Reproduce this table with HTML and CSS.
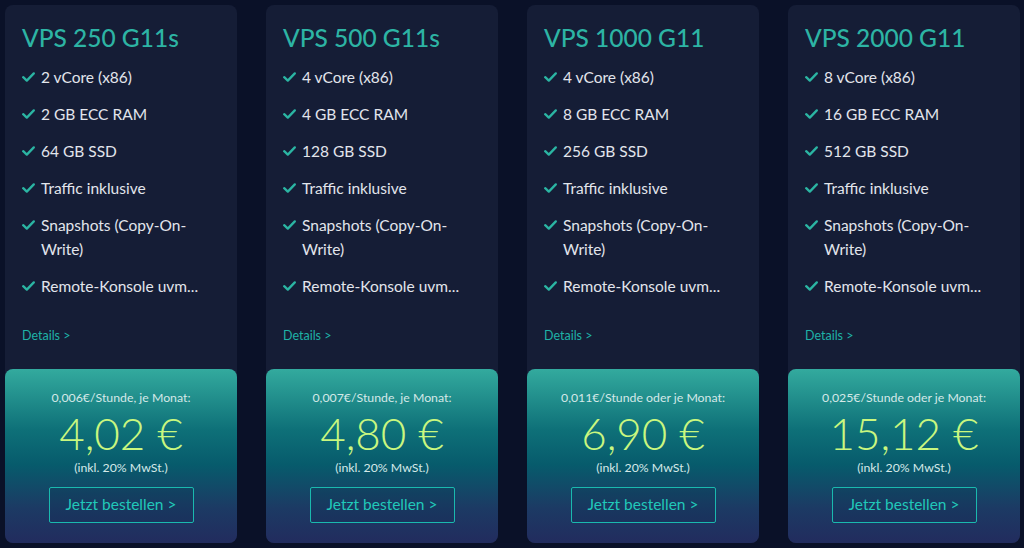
FILE: index.html
```html
<!DOCTYPE html>
<html>
<head>
    <link rel="stylesheet" href="styles.css">
</head>
<body>
    <div class="plans">
        <div class="plan">
            <div class="plan-body">
                <h2 class="plan-title">VPS 250 G11s</h2>
                <ul class="features">
                    <li><svg class="check" viewBox="0 0 13 10"><path d="M1.2 5.2 L4.8 8.6 L11.8 1.4"/></svg><span>2 vCore (x86)</span></li>
                    <li><svg class="check" viewBox="0 0 13 10"><path d="M1.2 5.2 L4.8 8.6 L11.8 1.4"/></svg><span>2 GB ECC RAM</span></li>
                    <li><svg class="check" viewBox="0 0 13 10"><path d="M1.2 5.2 L4.8 8.6 L11.8 1.4"/></svg><span>64 GB SSD</span></li>
                    <li><svg class="check" viewBox="0 0 13 10"><path d="M1.2 5.2 L4.8 8.6 L11.8 1.4"/></svg><span>Traffic inklusive</span></li>
                    <li><svg class="check" viewBox="0 0 13 10"><path d="M1.2 5.2 L4.8 8.6 L11.8 1.4"/></svg><span>Snapshots (Copy-On-Write)</span></li>
                    <li><svg class="check" viewBox="0 0 13 10"><path d="M1.2 5.2 L4.8 8.6 L11.8 1.4"/></svg><span>Remote-Konsole uvm...</span></li>
                </ul>
                <a class="details" href="#">Details &gt;</a>
            </div>
            <div class="price-box">
                <div class="price-label">0,006€/Stunde, je Monat:</div>
                <div class="price">4,02 €</div>
                <div class="price-note">(inkl. 20% MwSt.)</div>
                <a class="order" href="#">Jetzt bestellen &gt;</a>
            </div>
        </div>

        <div class="plan">
            <div class="plan-body">
                <h2 class="plan-title">VPS 500 G11s</h2>
                <ul class="features">
                    <li><svg class="check" viewBox="0 0 13 10"><path d="M1.2 5.2 L4.8 8.6 L11.8 1.4"/></svg><span>4 vCore (x86)</span></li>
                    <li><svg class="check" viewBox="0 0 13 10"><path d="M1.2 5.2 L4.8 8.6 L11.8 1.4"/></svg><span>4 GB ECC RAM</span></li>
                    <li><svg class="check" viewBox="0 0 13 10"><path d="M1.2 5.2 L4.8 8.6 L11.8 1.4"/></svg><span>128 GB SSD</span></li>
                    <li><svg class="check" viewBox="0 0 13 10"><path d="M1.2 5.2 L4.8 8.6 L11.8 1.4"/></svg><span>Traffic inklusive</span></li>
                    <li><svg class="check" viewBox="0 0 13 10"><path d="M1.2 5.2 L4.8 8.6 L11.8 1.4"/></svg><span>Snapshots (Copy-On-Write)</span></li>
                    <li><svg class="check" viewBox="0 0 13 10"><path d="M1.2 5.2 L4.8 8.6 L11.8 1.4"/></svg><span>Remote-Konsole uvm...</span></li>
                </ul>
                <a class="details" href="#">Details &gt;</a>
            </div>
            <div class="price-box">
                <div class="price-label">0,007€/Stunde, je Monat:</div>
                <div class="price">4,80 €</div>
                <div class="price-note">(inkl. 20% MwSt.)</div>
                <a class="order" href="#">Jetzt bestellen &gt;</a>
            </div>
        </div>

        <div class="plan">
            <div class="plan-body">
                <h2 class="plan-title">VPS 1000 G11</h2>
                <ul class="features">
                    <li><svg class="check" viewBox="0 0 13 10"><path d="M1.2 5.2 L4.8 8.6 L11.8 1.4"/></svg><span>4 vCore (x86)</span></li>
                    <li><svg class="check" viewBox="0 0 13 10"><path d="M1.2 5.2 L4.8 8.6 L11.8 1.4"/></svg><span>8 GB ECC RAM</span></li>
                    <li><svg class="check" viewBox="0 0 13 10"><path d="M1.2 5.2 L4.8 8.6 L11.8 1.4"/></svg><span>256 GB SSD</span></li>
                    <li><svg class="check" viewBox="0 0 13 10"><path d="M1.2 5.2 L4.8 8.6 L11.8 1.4"/></svg><span>Traffic inklusive</span></li>
                    <li><svg class="check" viewBox="0 0 13 10"><path d="M1.2 5.2 L4.8 8.6 L11.8 1.4"/></svg><span>Snapshots (Copy-On-Write)</span></li>
                    <li><svg class="check" viewBox="0 0 13 10"><path d="M1.2 5.2 L4.8 8.6 L11.8 1.4"/></svg><span>Remote-Konsole uvm...</span></li>
                </ul>
                <a class="details" href="#">Details &gt;</a>
            </div>
            <div class="price-box">
                <div class="price-label">0,011€/Stunde oder je Monat:</div>
                <div class="price">6,90 €</div>
                <div class="price-note">(inkl. 20% MwSt.)</div>
                <a class="order" href="#">Jetzt bestellen &gt;</a>
            </div>
        </div>

        <div class="plan">
            <div class="plan-body">
                <h2 class="plan-title">VPS 2000 G11</h2>
                <ul class="features">
                    <li><svg class="check" viewBox="0 0 13 10"><path d="M1.2 5.2 L4.8 8.6 L11.8 1.4"/></svg><span>8 vCore (x86)</span></li>
                    <li><svg class="check" viewBox="0 0 13 10"><path d="M1.2 5.2 L4.8 8.6 L11.8 1.4"/></svg><span>16 GB ECC RAM</span></li>
                    <li><svg class="check" viewBox="0 0 13 10"><path d="M1.2 5.2 L4.8 8.6 L11.8 1.4"/></svg><span>512 GB SSD</span></li>
                    <li><svg class="check" viewBox="0 0 13 10"><path d="M1.2 5.2 L4.8 8.6 L11.8 1.4"/></svg><span>Traffic inklusive</span></li>
                    <li><svg class="check" viewBox="0 0 13 10"><path d="M1.2 5.2 L4.8 8.6 L11.8 1.4"/></svg><span>Snapshots (Copy-On-Write)</span></li>
                    <li><svg class="check" viewBox="0 0 13 10"><path d="M1.2 5.2 L4.8 8.6 L11.8 1.4"/></svg><span>Remote-Konsole uvm...</span></li>
                </ul>
                <a class="details" href="#">Details &gt;</a>
            </div>
            <div class="price-box">
                <div class="price-label">0,025€/Stunde oder je Monat:</div>
                <div class="price">15,12 €</div>
                <div class="price-note">(inkl. 20% MwSt.)</div>
                <a class="order" href="#">Jetzt bestellen &gt;</a>
            </div>
        </div>
    </div>
</body>
</html>
```

FILE: styles.css
```css
body {
    margin: 0;
    padding: 5px 4px 5px 5px;
    background: #0a1128;
    font-family: Lato, "Noto Sans", sans-serif;
    color: #e2e5ec;
}

.plans {
    display: grid;
    grid-template-columns: repeat(4, 232px);
    column-gap: 29px;
    height: 538px;
}

.plan {
    display: flex;
    flex-direction: column;
    background: #151d36;
    border-radius: 8px;
}

.plan-body {
    flex: 1;
    display: flex;
    flex-direction: column;
    padding: 17px 17px 24px 17px;
}

.plan-title {
    margin: 0;
    font-size: 24.5px;
    line-height: 32px;
    font-weight: 500;
    color: #2db4a4;
}

.features {
    list-style: none;
    margin: 11px 0 0 0;
    padding: 0;
}

.features li {
    display: flex;
    align-items: flex-start;
    font-size: 15.5px;
    line-height: 24px;
    margin-bottom: 13px;
}

.check {
    flex: none;
    width: 13px;
    height: 10px;
    margin: 7px 6px 0 0;
    fill: none;
    stroke: #2bb5a3;
    stroke-width: 2.3;
    stroke-linecap: round;
    stroke-linejoin: round;
}

.details {
    margin-top: auto;
    font-size: 12.5px;
    line-height: 18px;
    color: #1fb2a7;
    text-decoration: none;
}

.price-box {
    height: 174px;
    box-sizing: border-box;
    padding: 21px 0 20px 0;
    border-radius: 8px;
    background: linear-gradient(180deg, #33aa9e 0%, #0e7078 35%, #075b6c 55%, #1c3a64 80%, #222c5e 100%);
    text-align: center;
}

.price-label {
    font-size: 12.3px;
    line-height: 16px;
    color: #d5e9e8;
}

.price {
    margin-top: 1px;
    font-size: 44px;
    line-height: 53px;
    font-weight: 300;
    color: #c9f77f;
}

.price-note {
    font-size: 12.3px;
    line-height: 16px;
    color: #d5e9e8;
}

.order {
    display: inline-block;
    box-sizing: border-box;
    width: 145px;
    height: 36px;
    margin-top: 11px;
    border: 1.5px solid #1ab9ae;
    border-radius: 2px;
    background: rgba(10, 40, 70, 0.15);
    font-size: 15.5px;
    line-height: 33px;
    color: #21c8b9;
    text-decoration: none;
}
```
